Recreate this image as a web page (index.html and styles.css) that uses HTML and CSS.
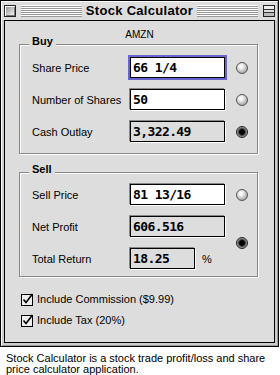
FILE: index.html
```html
<!DOCTYPE html>
<html lang="en">
<head>
    <meta charset="UTF-8">
    <meta name="viewport" content="width=device-width, initial-scale=1.0">
    <title>Stock Calculator</title>
    <link rel="stylesheet" href="styles.css">
</head>
<body>
    <div class="window">
        <!-- Barre de titre -->
        <div class="titlebar">
            <span class="close-box"></span>
            <span class="stripes"></span>
            <span class="title">Stock Calculator</span>
            <span class="stripes"></span>
            <span class="collapse-box"></span>
        </div>

        <div class="content">
            <div class="symbol">AMZN</div>

            <!-- Achat -->
            <div class="group">
                <div class="group-title">Buy</div>
                <div class="rows">
                    <span class="label">Share Price</span>
                    <div class="field focused">66 1/4</div>
                    <span class="radio"></span>

                    <span class="label">Number of Shares</span>
                    <div class="field">50</div>
                    <span class="radio"></span>

                    <span class="label">Cash Outlay</span>
                    <div class="field readonly">3,322.49</div>
                    <span class="radio on"></span>
                </div>
            </div>

            <!-- Vente -->
            <div class="group sell">
                <div class="group-title">Sell</div>
                <div class="rows">
                    <span class="label">Sell Price</span>
                    <div class="field">81 13/16</div>
                    <span class="radio"></span>

                    <span class="label">Net Profit</span>
                    <div class="field readonly">606.516</div>
                    <span class="radio on span-2"></span>

                    <span class="label">Total Return</span>
                    <div class="field-cell">
                        <div class="field readonly short">18.25</div>
                        <span class="percent">%</span>
                    </div>
                </div>
            </div>

            <!-- Options -->
            <div class="checks">
                <div class="check">
                    <svg class="checkbox" width="13" height="13" viewBox="0 0 13 13">
                        <rect x="0.5" y="1.5" width="11" height="11" fill="#eee" stroke="#000"/>
                        <path d="M2.5 6.5 L5 9.5 L11.5 1" fill="none" stroke="#000" stroke-width="1.6"/>
                    </svg>
                    <span>Include Commission ($9.99)</span>
                </div>
                <div class="check">
                    <svg class="checkbox" width="13" height="13" viewBox="0 0 13 13">
                        <rect x="0.5" y="1.5" width="11" height="11" fill="#eee" stroke="#000"/>
                        <path d="M2.5 6.5 L5 9.5 L11.5 1" fill="none" stroke="#000" stroke-width="1.6"/>
                    </svg>
                    <span>Include Tax (20%)</span>
                </div>
            </div>
        </div>
    </div>

    <div class="caption">Stock Calculator is a stock trade profit/loss and share price calculator application.</div>
</body>
</html>
```

FILE: styles.css
```css
body {
    margin: 0;
    background-color: #fff;
    font-family: "Liberation Sans", Arial, sans-serif;
    color: #000;
}

.window {
    width: 279px;
    height: 347px;
    box-sizing: border-box;
    border: 1px solid #000;
    background-color: #cccccc;
    padding: 0 3px 3px;
    display: flex;
    flex-direction: column;
    box-shadow: inset 1px 1px 0 #fff, inset -1px -1px 0 #999;
}

.titlebar {
    height: 18px;
    display: flex;
    align-items: center;
    gap: 4px;
    background-color: #dddddd;
    margin: 1px -2px 0;
    padding: 0 2px;
}

.close-box {
    width: 12px;
    height: 12px;
    box-sizing: border-box;
    border: 1px solid #222;
    margin-right: 1px;
    background: linear-gradient(135deg, #888, #fff);
    box-shadow: inset 1px 1px 0 #fff, inset -1px -1px 0 #777;
}

.stripes {
    flex: 1;
    height: 12px;
    background: repeating-linear-gradient(to bottom, #fff 0 1px, #999 1px 2px);
}

.title {
    font-size: 13px;
    font-weight: bold;
    letter-spacing: 0.3px;
    line-height: 18px;
    white-space: nowrap;
}

.collapse-box {
    width: 12px;
    height: 12px;
    box-sizing: border-box;
    border: 1px solid #222;
    margin-left: 1px;
    background: linear-gradient(to bottom, #eee 0 3px, #333 3px 4px, #ddd 4px 6px, #333 6px 7px, #bbb 7px);
}

.content {
    flex: 1;
    border: 1px solid #000;
    background-color: #dddddd;
    padding-top: 7px;
}

.symbol {
    text-align: center;
    font-size: 10px;
    line-height: 13px;
    margin-bottom: 3px;
}

.group {
    width: 239px;
    box-sizing: border-box;
    margin-left: 14px;
    border: 1px solid #888;
    box-shadow: inset 1px 1px 0 #fff, 1px 1px 0 #fff;
    padding: 0 0 10px 12px;
}

.group.sell {
    margin-top: 18px;
    padding-bottom: 6px;
}

.group-title {
    width: max-content;
    margin: -10px 0 0 -3px;
    padding: 0 3px;
    background-color: #dddddd;
    font-size: 11px;
    font-weight: bold;
    line-height: 13px;
}

.rows {
    display: grid;
    grid-template-columns: 97px 107px 12px;
    row-gap: 9px;
    align-items: center;
    margin-top: 8px;
}

.sell .rows {
    margin-top: 7px;
}

.label {
    font-size: 11px;
    white-space: nowrap;
}

.field {
    box-sizing: border-box;
    width: 95px;
    height: 21px;
    margin: 1px;
    border: 1px solid #000;
    background-color: #fff;
    box-shadow: -1px -1px 0 #888, 1px 1px 0 #fff;
    padding-left: 2px;
    font-family: "DejaVu Sans Mono", monospace;
    font-size: 13px;
    font-weight: bold;
    letter-spacing: -0.6px;
    line-height: 19px;
    white-space: nowrap;
}

.field.focused {
    box-shadow: 0 0 0 2px #6666cc;
}

.field.readonly {
    background-color: #dddddd;
}

.field.short {
    width: 65px;
}

.field-cell {
    display: flex;
    align-items: center;
}

.percent {
    font-size: 11px;
    margin-left: 6px;
}

.radio {
    width: 12px;
    height: 12px;
    box-sizing: border-box;
    border-radius: 50%;
    border: 1px solid #555;
    background: radial-gradient(circle at 40% 35%, #fff 0, #eee 25%, #999 85%);
}

.radio.on {
    border-color: #222;
    background: radial-gradient(circle, #000 0 2.5px, #333 3px, #666 4px, #aaa 5px);
}

.span-2 {
    grid-row: span 2;
}

.checks {
    margin: 16px 0 0 16px;
    display: flex;
    flex-direction: column;
    gap: 8px;
}

.check {
    display: flex;
    align-items: center;
    gap: 3px;
    height: 13px;
    font-size: 11px;
    line-height: 13px;
}

.checkbox {
    display: block;
}

.caption {
    width: 270px;
    margin: 6px 0 0 6px;
    font-size: 11px;
    line-height: 11px;
}
```
